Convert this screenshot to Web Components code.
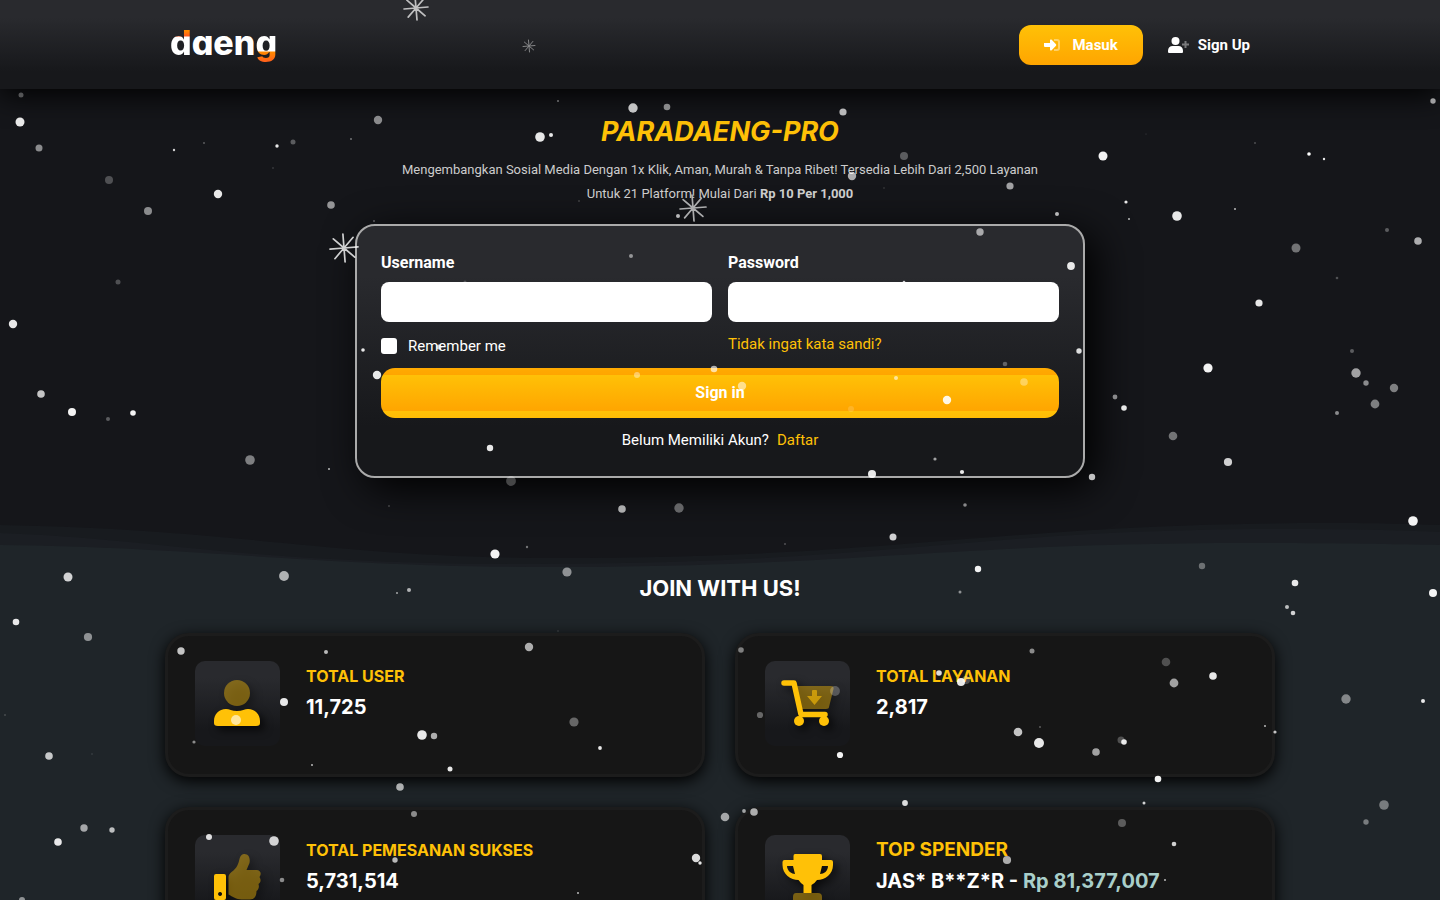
<!DOCTYPE html>
<html lang="id">
<head>
<meta charset="utf-8">
<meta name="viewport" content="width=device-width, initial-scale=1">
<title>Paradaeng-Pro</title>
<style>
body{margin:0;background:#1f2529;color:#fff;font:15px/24px Roboto,"Liberation Sans",sans-serif;--gold:#ffc107;--display:Inter,"Open Sans",sans-serif}
</style>
</head>
<body>
<daeng-page></daeng-page>
<script>
const define=(name,html,setup)=>{
  const t=document.createElement('template');
  t.innerHTML='<style>*{box-sizing:border-box}a{color:inherit;text-decoration:none}</style>'+html;
  customElements.define(name,class extends HTMLElement{
    constructor(){
      super();
      this.attachShadow({mode:'open'}).append(t.content.cloneNode(true));
      if(setup)setup(this.shadowRoot,this);
    }
  });
};

define('daeng-logo',`
<style>
:host{display:block}
a{display:block;font:800 34px/40px var(--display);font-feature-settings:"cv11";color:#fff}
span{background:linear-gradient(#ff8a00 0 9px,#ff5a1f 14px,#fff 15px);background-clip:text;-webkit-background-clip:text;color:transparent}
.g{background-image:linear-gradient(#fff 29px,#ff8a00 30px,#ff5a1f)}
</style>
<a href="#"><span>d</span>aen<span class="g">g</span></a>`);

define('site-header',`
<style>
:host{display:block;position:relative;z-index:1;background:linear-gradient(#292a2e 20%,#17181b 80%);box-shadow:0 5px 30px #000}
.bar{max-width:1140px;margin:auto;padding:25px 15px 24px;display:flex;justify-content:space-between;align-items:flex-start}
.logo{padding-left:5px;height:40px;margin-top:-2px}
nav{display:flex}
a{display:flex;align-items:center;height:40px;padding:0 25px;font-weight:700;border-radius:12px}
.in{background:linear-gradient(#ffc107,#ffa500);gap:12px}
.up{gap:8px}
</style>
<div class="bar"><daeng-logo class="logo"></daeng-logo>
<nav>
<a class="in" href="#"><svg width="16" height="16" viewBox="0 0 16 16" fill="#fff"><path d="M0 6h6V3.5c0-1 1-1.400 1.700-.7l4.300 4.500c.4.400.4 1 0 1.400l-4.300 4.500c-.7.700-1.700.3-1.700-.7V10H1a1 1 0 0 1-1-1z"/><path d="M10 2h3a3 3 0 0 1 3 3v6a3 3 0 0 1-3 3h-3v-2h3a1 1 0 0 0 1-1V5a1 1 0 0 0-1-1h-3z" opacity=".4"/></svg>Masuk</a>
<a class="up" href="#"><svg width="22" height="16" viewBox="0 0 22 16" fill="#fff"><circle cx="7.500" cy="4" r="4"/><path d="M4.500 9h6c2.500 0 4.500 2 4.500 4.500v1c0 1-.5 1.500-1.500 1.500h-12C.5 16 0 15.500 0 14.500v-1C0 11 2 9 4.500 9z"/><path d="M16.500 4h2v2.500H21v2h-2.500V11h-2V8.500H14v-2h2.500z" opacity=".4"/></svg>Sign Up</a>
</nav></div>`);

define('login-form',`
<style>
:host{display:block;max-width:730px;margin:auto}
form{border:2px solid #aaa;border-radius:20px;padding:25px 24px 24px;background:linear-gradient(#292a2e 20%,#17181b 80%);box-shadow:10px 10px 40px #000}
.grid{display:grid;grid-template-columns:1fr 1fr;column-gap:16px}
.field label{display:block;font-size:16px;font-weight:700;margin-bottom:7px}
.field input{display:block;width:100%;height:40px;border:0;border-radius:8px;background:#fff;padding:0 12px;font:inherit}
.row{margin:10px 0;line-height:24px}
.check{display:flex;align-items:center;gap:11px;padding-top:2px}
.check input{appearance:none;width:16px;height:16px;margin:0;border-radius:3px;background:#fff}
.row a,p a{color:var(--gold)}
button{display:block;width:100%;height:50px;border:7px solid transparent;border-radius:14px;background:linear-gradient(#ffc107,#ffa500);color:#fff;font:700 16px/24px Roboto,sans-serif}
p{margin:10px 0 0;text-align:center}
p a{margin-left:8px}
</style>
<form>
<div class="grid">
<div class="field"><label for="u">Username</label><input id="u" type="text"></div>
<div class="field"><label for="p">Password</label><input id="p" type="password"></div>
<div class="row check"><input id="r" type="checkbox"><label for="r">Remember me</label></div>
<div class="row"><a href="#">Tidak ingat kata sandi?</a></div>
</div>
<button type="button">Sign in</button>
<p>Belum Memiliki Akun?<a href="#">Daftar</a></p>
</form>`);

define('hero-section',`
<style>
:host{display:block;background:#15161a;padding-top:27px}
h1{margin:0;text-align:center;font:italic 700 27px/32px var(--display);color:var(--gold)}
p{max-width:730px;margin:10px auto 18px;padding:0 36px;text-align:center;font-size:13px;color:#ccc}
svg{display:block;width:100%;height:50px;margin-top:41px}
</style>
<h1>PARADAENG-PRO</h1>
<p><span>Mengembangkan Sosial Media Dengan 1x Klik, Aman, Murah &amp; Tanpa Ribet! Tersedia Lebih Dari 2,500 Layanan</span> <span>Untuk 21 Platform! Mulai Dari</span> <b>Rp 10 Per 1,000</b></p>
<login-form></login-form>
<svg viewBox="0 0 1440 50" preserveAspectRatio="none">
<path fill="#181b1f" d="M0 6C240 10 330 39 560 39C900 39 1000 4 1330 4C1380 4 1410 5 1440 6V50H0z"/>
<path fill="#1b1e23" d="M0 14C150 19 250 45 520 45C900 45 960 10 1290 10C1350 10 1400 11 1440 13V50H0z"/>
<path fill="#1f2529" d="M0 26C200 28 320 48 550 48C850 48 950 24 1250 24C1330 24 1390 25 1440 26V50H0z"/>
</svg>`);

const icons={
user:`<circle cx="42" cy="32" r="13" opacity=".42"/><path d="M31 48c3 0 6 2 11 2s8-2 11-2c7 0 12 5 12 12v2c0 2-1 3-4 3H23c-3 0-4-1-4-3v-2c0-7 5-12 12-12z"/>`,
cart:`<path opacity=".42" d="M31 25h35c2 0 3 1 2.500 3l-4.500 18c0 1-1 2-3 2H36z"/><path d="M47 30q0-1 1-1h3q1 0 1 1v5h5l-7.500 9L42 35h5z" opacity=".6"/><path fill="none" stroke="#ffc107" stroke-width="5.500" stroke-linecap="round" stroke-linejoin="round" d="M19 22h10l7 31.500h24"/><circle cx="34" cy="60" r="5"/><circle cx="59" cy="60" r="5"/>`,
thumb:`<path opacity=".42" d="M33.500 42c0-2 1-3 3-5 6-4 7-9 8-13 1-4 3-5 5-5 4 0 6 4 5 9l-3 7h10c4 0 5.500 4 3 7 2 3 1 6-1 7 1 3 0 6-2 7 0 5-2 8.500-7 8.500h-8c-5 0-9-3-13-5z"/><path fill-rule="evenodd" d="M21 39h8q2 0 2 2v22q0 2-2 2h-8q-2 0-2-2V41q0-2 2-2zm4 18a2 2 0 1 0 .1 0z"/>`,
trophy:`<path d="M30 19h25q2 0 2 2v4h9q2 0 2 2v3c0 9-8 15-16 15q-2 3-5.500 5v8h-8v-8q-3-2-5-5c-8 0-16-6-16-15v-3q0-2 2-2h9v-4q0-2 1.500-2zM22 31c0 5 5 8 8 8l-2-8zM63 31h-6l-2 8c4 0 8-3 8-8z" fill-rule="evenodd"/><path opacity=".42" d="M31 58h22q4 0 4 4v4H28v-4q0-4 3-4z"/>`};

define('stat-card',`
<style>
:host{display:flex;align-items:flex-start;gap:26px;min-height:144px;padding:25px 27px;background:#161616;border:3px solid #1c1c1c;border-radius:24px;box-shadow:0 4px 15px #000}
.tile{flex:none;width:85px;height:85px;border-radius:10px;background:linear-gradient(#292a2e 20%,#17181b 80%)}
svg{display:block;width:85px;height:85px;fill:#ffc107;filter:drop-shadow(4px 4px 4px rgba(0,0,0,.7))}
.text{padding-top:3px;font:700 20px/32px var(--display)}
.label{display:block;line-height:24px;font-size:var(--label,16px);color:var(--gold);margin-bottom:3px}
.value{display:block}
::slotted(span){color:#a9cfca}
</style>
<div class="tile"><svg viewBox="0 0 85 85"></svg></div>
<div class="text"><slot class="label" name="label"></slot><slot class="value"></slot></div>`,
(root,host)=>{root.querySelector('svg').innerHTML=icons[host.getAttribute('icon')]||'';});
</script>
<script>
define('join-section',`
<style>
:host{display:block;max-width:1140px;margin:auto;padding:4px 15px 60px}
h2{margin:0 0 30px;text-align:center;font:700 22px/30px var(--display)}
.grid{display:grid;grid-template-columns:repeat(auto-fit,minmax(380px,1fr));gap:30px}
.top{--label:19px}
b{font:inherit}
</style>
<h2>JOIN WITH US!</h2>
<div class="grid"></div>`,root=>{
  const cards=[['user','TOTAL USER','11,725'],['cart','TOTAL LAYANAN','2,817'],['thumb','TOTAL PEMESANAN SUKSES','5,731,514'],['trophy','TOP SPENDER','JAS* B**Z*R - <span>Rp 81,377,007</span>']];
  root.querySelector('.grid').innerHTML=cards.map(([icon,label,value])=>
    `<stat-card icon="${icon}"${icon==='trophy'?' class="top"':''}><b slot="label">${label}</b>${value}</stat-card>`).join('');
});

/* x, y, radius, opacity of every drifting flake */
const flakes=[[20,122,4.5,.9],[21,95,2.5,.3],[39,148,3.5,.5],[109,180,4,.25],[148,211,4,.5],[174,150,1.2,.8],[204,143,.8,.5],[218,194,4.2,.9],[277,146,1.7,.9],[293,142,2.5,.3],[331,205,3.8,.55],[378,120,4.2,.5],[351,139,1,.4],[273,168,.7,.3],[13,324,4.2,.9],[118,282,2.5,.25],[41,394,3.8,.75],[72,412,4,.95],[108,419,2,.3],[133,413,2.8,.95],[250,460,4.8,.45],[329,469,1,.7],[374,221,1,.3],[558,101,1,.4],[633,108,4.7,.75],[667,107,3.3,.5],[540,137,4.8,.9],[551,135,2,.9],[678,216,2,.7],[579,201,.8,.3],[843,112,3.6,.7],[904,156,4,.3],[852,176,4.2,.65],[1010,186,3.6,.6],[1057,214,2,.7],[884,188,.8,.2],[1103,156,4.5,.95],[1177,216,4.8,.9],[1126,202,1.6,.9],[1129,219,1,.7],[1235,209,1,.7],[1309,154,1.8,1],[1324,159,1.2,.9],[1255,143,.8,.4],[1433,101,2.7,.6],[1418,241,3.8,.65],[1387,230,2,.3],[1296,248,4.5,.4],[1337,278,1.3,.25],[1146,134,.6,.2],[1259,303,3.6,.9],[980,232,3.7,.6],[1071,266,3.9,.9],[631,256,2,.5],[904,282,1.3,.8],[465,282,1.5,.2],[363,350,1.8,.9],[377,375,4.2,.9],[439,347,2.5,.7],[1079,351,2.7,.85],[1005,364,2.3,.3],[714,369,3.3,.65],[637,375,3,.4],[742,386,4.2,.55],[896,378,2,.6],[1024,382,3.8,.35],[947,400,4.2,.9],[851,409,3,.15],[490,448,3.2,.9],[935,459,1.6,.6],[962,472,2.1,.9],[872,474,4,.9],[511,481,4.9,.25],[1092,477,3.2,.75],[622,509,3.8,.65],[679,508,4.7,.35],[389,506,1,.2],[965,505,1.8,.5],[1115,397,2.4,.5],[1124,408,2.8,.9],[1208,368,4.6,.95],[1173,436,4.3,.4],[1228,462,4.1,.8],[1352,351,2,.3],[1356,373,4.7,.6],[1366,383,2.7,.5],[1394,388,4.2,.45],[1375,404,4.4,.45],[1337,413,2,.5],[1413,521,4.8,.95],[893,537,3.5,.8],[785,544,1,.25],[495,554,4.6,.95],[527,547,1.2,.4],[567,572,4.6,.5],[68,577,4.5,.8],[284,576,4.9,.65],[409,590,2,.65],[397,593,1,.6],[978,569,3.2,.95],[960,592,1.5,.5],[1202,566,3.2,.35],[1295,583,3.3,.9],[1287,607,2,.7],[1293,613,2.3,.8],[1433,593,4,.95],[16,622,3.3,.9],[88,637,4.1,.5],[558,631,.7,.2],[181,651,3.7,.75],[326,652,2,.7],[529,647,4.2,.65],[284,702,4,.9],[236,720,5,.6],[194,742,1.6,.5],[422,735,4.8,.9],[434,736,3.2,.65],[574,722,4.6,.35],[600,748,1.9,.9],[312,765,1,.7],[450,769,2.5,.9],[400,787,3.8,.65],[414,814,3,.5],[209,837,3,.85],[274,841,4.8,.8],[282,880,2.3,.5],[395,860,2.7,.7],[384,886,1,.3],[578,893,1,.7],[5,715,.8,.3],[49,756,3.8,.75],[92,754,.7,.2],[84,828,3.7,.6],[112,830,2.7,.7],[58,842,3.8,.9],[22,900,3,.5],[741,650,2.8,.45],[760,715,3.1,.35],[835,691,4.9,.25],[939,673,2.8,.85],[961,682,4,.9],[966,680,4,.25],[1032,651,2.5,.5],[1018,732,4.3,.75],[1039,743,5,.9],[1040,727,1,.3],[1096,752,3.8,.6],[1166,662,4.3,.25],[1174,683,4.4,.6],[1213,676,3.8,.9],[840,755,3.1,.95],[1121,740,3.5,.25],[1124,742,2.8,.9],[1158,779,3.3,.95],[1265,726,1,.7],[1275,732,1.6,.75],[1346,699,4.7,.45],[1423,701,2,.9],[905,803,2.9,.85],[1144,803,1.5,.8],[725,817,4.3,.6],[744,811,1.9,.6],[754,812,3.8,.65],[696,858,4.2,.85],[700,863,1.7,.9],[1007,860,4.1,.65],[1122,823,4,.3],[1174,844,2.3,.8],[1165,880,1,.7],[1384,805,4.8,.4],[1366,822,2.7,.4]];
/* x, y, arm length, opacity */
const stars=[[416,8,12,.7],[529,46,6,.45],[693,208,13,.65],[344,248,14,.8]];

define('snow-fall',`
<style>
:host{display:block;position:absolute;inset:0;z-index:2;pointer-events:none;overflow:hidden}
svg{display:block;width:100%;height:100%}
</style><svg fill="#fff" stroke-linecap="round" aria-hidden="true"></svg>`,root=>{
  const star=([x,y,r,o])=>{
    let d='';
    for(let k=0;k<8;k++){
      const a=k*Math.PI/4-.08;
      d+=`M${x} ${y}L${(x+r*Math.cos(a)).toFixed(1)} ${(y+r*Math.sin(a)).toFixed(1)}`;
    }
    return `<path d="${d}" stroke="#fff" stroke-width="${r>8?1.7:1}" opacity="${o}"/>`;
  };
  root.querySelector('svg').innerHTML=
    flakes.map(([x,y,r,o])=>`<circle cx="${x}" cy="${y}" r="${r}" opacity="${o}"/>`).join('')+stars.map(star).join('');
});

define('daeng-page',`
<style>:host{display:block;position:relative}</style>
<site-header></site-header>
<main><hero-section></hero-section><join-section></join-section></main>
<snow-fall></snow-fall>`);
</script>
</body>
</html>
